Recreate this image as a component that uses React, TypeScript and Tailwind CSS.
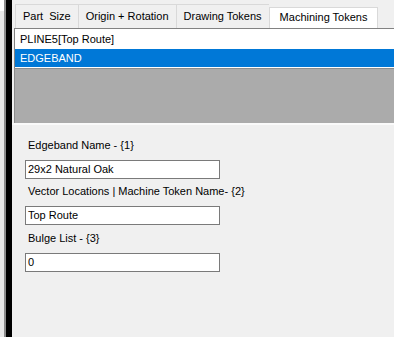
const tabs = [
  { label: 'Part  Size', active: false },
  { label: 'Origin + Rotation', active: false },
  { label: 'Drawing Tokens', active: false },
  { label: 'Machining Tokens', active: true },
];

const fields = [
  { label: 'Edgeband Name - {1}', value: '29x2 Natural Oak', labelGap: 'mt-[14px]' },
  { label: 'Vector Locations | Machine Token Name- {2}', value: 'Top Route', labelGap: 'mt-[6px]' },
  { label: 'Bulge List - {3}', value: '0', labelGap: 'mt-[7px]' },
];

const App = () => {
  return (
    <div className="flex h-[337px] w-[394px] overflow-hidden bg-[#f0f0f0] font-['Liberation_Sans',Arial,sans-serif] text-[11px] text-black">
      {/* left splitter edge */}
      <div className="flex w-[4px] flex-col bg-[#e8e8e8]">
        <div className="h-[11px] bg-white" />
      </div>
      <div className="w-[2px] bg-[#8c8c8c]" />
      <div className="w-[6px] bg-black" />

      <div className="flex min-w-0 flex-1 flex-col">
        {/* tab strip */}
        <div className="flex h-[28px] items-end pl-[3px]">
          {tabs.map((tab) =>
            tab.active ? (
              <div
                key={tab.label}
                className="flex h-[21px] items-center whitespace-pre border border-b-0 border-[#d9d9d9] bg-white px-[10px] pb-[2px]"
              >
                {tab.label}
              </div>
            ) : (
              <div
                key={tab.label}
                className="flex h-[24px] items-center whitespace-pre border border-b-0 border-r-0 border-[#d9d9d9] bg-[#f0f0f0] px-[7px] last:border-r"
              >
                {tab.label}
              </div>
            )
          )}
        </div>

        {/* list box */}
        <div className="ml-[2px] border-l border-t border-[#828282] bg-white pb-px">
          <div className="flex h-[20px] items-center whitespace-nowrap pl-[5px]">PLINE5[Top Route]</div>
          <div className="flex h-[18px] items-center bg-[#0078d7] pl-[5px] text-white">EDGEBAND</div>
        </div>
        <div className="ml-[2px] h-[55px] border-l border-t border-[#8c8c8c] bg-[#ababab]" />
        <div className="h-[2px] bg-[#fafafa]" />

        {/* token fields */}
        <div className="flex flex-1 flex-col">
          {fields.map((field) => (
            <div key={field.label} className="flex flex-col">
              <div className={`${field.labelGap} pl-[16px] leading-[13px] whitespace-nowrap`}>{field.label}</div>
              <div className="ml-[13px] mt-[8px] flex h-[19px] w-[195px] items-center border border-[#7a7a7a] bg-white px-[2px]">
                {field.value}
              </div>
            </div>
          ))}
        </div>
      </div>
    </div>
  );
};

export default App;
